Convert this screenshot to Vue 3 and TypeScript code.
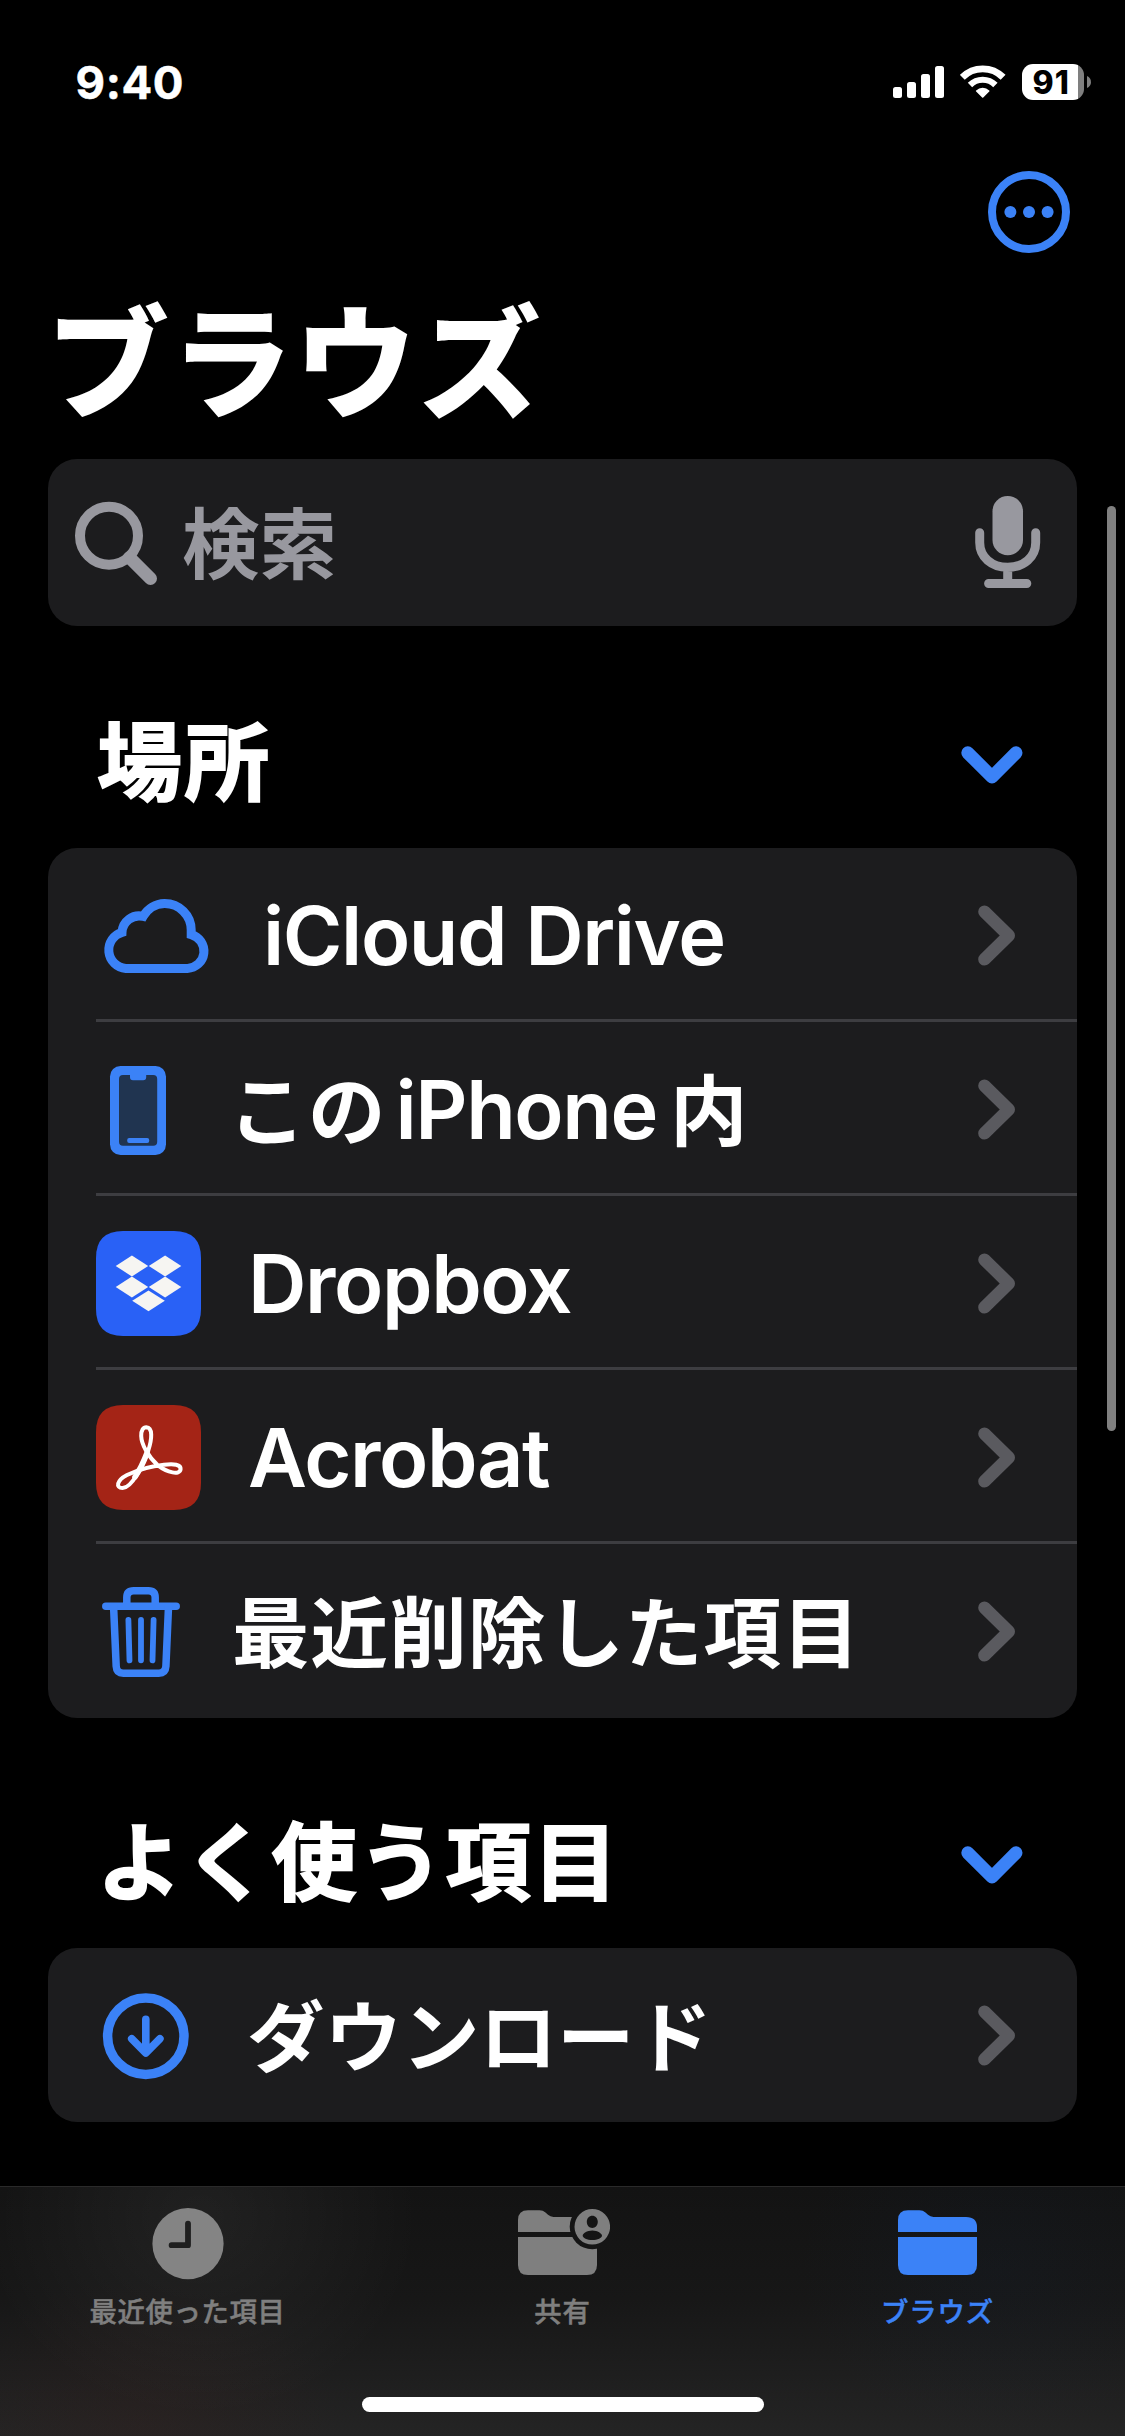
<script setup lang="ts">
interface TextPart {
  text: string
  script: 'jp' | 'latin'
}

interface Place {
  id: string
  parts: TextPart[]
}

interface Section {
  id: string
  title: string
  items: Place[]
}

const sections: Section[] = [
  {
    id: 'locations',
    title: '場所',
    items: [
      { id: 'icloud', parts: [{ text: 'iCloud Drive', script: 'latin' }] },
      {
        id: 'phone',
        parts: [
          { text: 'この', script: 'jp' },
          { text: 'iPhone', script: 'latin' },
          { text: '内', script: 'jp' },
        ],
      },
      { id: 'dropbox', parts: [{ text: 'Dropbox', script: 'latin' }] },
      { id: 'acrobat', parts: [{ text: 'Acrobat', script: 'latin' }] },
      { id: 'trash', parts: [{ text: '最近削除した項目', script: 'jp' }] },
    ],
  },
  {
    id: 'favorites',
    title: 'よく使う項目',
    items: [{ id: 'downloads', parts: [{ text: 'ダウンロード', script: 'jp' }] }],
  },
]
</script>

<template>
  <div class="screen">
    <header class="status">
      <span class="time">9:40</span>
      <div class="indicators">
        <svg class="signal" width="51" height="32" fill="#fff">
          <rect x="0" y="21" width="9" height="11" rx="2.5" />
          <rect x="14" y="16" width="9" height="16" rx="2.5" />
          <rect x="28" y="8" width="9" height="24" rx="2.5" />
          <rect x="42" y="0" width="9" height="32" rx="2.5" />
        </svg>
        <svg class="wifi" width="46" height="33" fill="none" stroke="#fff">
          <path d="M2.3 12.3A28.8 28.8 0 0 1 43.1 12.3" stroke-width="6.9" />
          <path d="M10 20A18 18 0 0 1 35.4 20" stroke-width="6.2" />
          <path d="M22.7 32 16.7 26A8.6 8.6 0 0 1 28.7 26Z" fill="#fff" stroke-width="1.6" stroke-linejoin="round" />
        </svg>
        <div class="battery">
          <div class="cell"><span class="level">91</span></div>
          <svg width="4" height="12"><path d="M0 0C5.3 1.8 5.3 10.2 0 12Z" fill="#7f7f7f" /></svg>
        </div>
      </div>
    </header>

    <div class="toolbar">
      <svg width="82" height="82">
        <circle cx="41" cy="41" r="37" fill="none" stroke="#3b82f7" stroke-width="8" />
        <g fill="#3b82f7">
          <circle cx="22.4" cy="41" r="6" />
          <circle cx="41" cy="41" r="6" />
          <circle cx="59.6" cy="41" r="6" />
        </g>
      </svg>
    </div>

    <h1 class="title">ブラウズ</h1>

    <div class="search">
      <svg width="84" height="86" fill="none" stroke="#98989f">
        <circle cx="34" cy="35.8" r="29" stroke-width="10" />
        <path d="M54.5 57.5 75.5 78.5" stroke-width="13" stroke-linecap="round" />
      </svg>
      <span class="placeholder">検索</span>
      <svg class="mic" width="66" height="92" fill="none" stroke="#98989f" stroke-width="9" stroke-linecap="round">
        <rect x="17.5" y="0" width="30.5" height="59.3" rx="15.2" fill="#98989f" stroke="none" />
        <path d="M4.7 36.7V46.5C4.7 61 16.5 71.3 32.7 71.3S60.7 61 60.7 46.5V36.7M32.7 72V87M13.6 87.5H51.8" />
      </svg>
    </div>

    <section v-for="section in sections" :key="section.id" :class="section.id">
      <div class="section-head">
        <h2>{{ section.title }}</h2>
        <svg width="62" height="38" fill="none" stroke="#3b82f7" stroke-width="13" stroke-linecap="round" stroke-linejoin="round">
          <path d="M6.8 6.8 31 31 55 6.8" />
        </svg>
      </div>
      <ul class="card">
        <li v-for="item in section.items" :key="item.id" class="row" :class="item.id">
          <svg v-if="item.id === 'icloud'" class="icon" height="174" fill="none" stroke="#3b82f7" stroke-width="9">
            <path d="M29.8 120.4A18.4 18.4 0 0 1 26 84.4 17.2 17.2 0 0 1 47.2 68.4 25.5 25.5 0 0 1 68.5 55.5 26.5 26.5 0 0 1 95.2 82V86.6A17.2 17.2 0 0 1 91.4 120.4Z" />
          </svg>
          <svg v-else-if="item.id === 'phone'" class="icon" height="174">
            <rect x="14" y="44" width="56" height="89" rx="10.5" fill="#3b82f7" />
            <path d="M27 53H34V55.3Q34 58.3 37 58.3H47.2Q50.2 58.3 50.2 55.3V53H57.2Q61.2 53 61.2 57V119.7Q61.2 123.7 57.2 123.7H27Q23 123.7 23 119.7V57Q23 53 27 53Z" fill="#203450" />
            <rect x="31.2" y="116" width="22" height="5" rx="2" fill="#3b82f7" />
          </svg>
          <svg v-else-if="item.id === 'dropbox'" class="icon" height="174">
            <path d="M27 35H78Q105 35 105 62V113Q105 140 78 140H27Q0 140 0 113V62Q0 35 27 35Z" fill="#2961f6" />
            <g fill="#f6f5f2">
              <path d="M19.7 70 35.9 59.6 52.2 70 35.9 80.4Z" />
              <path d="M52.8 70 69.1 59.6 85.3 70 69.1 80.4Z" />
              <path d="M19.7 91 35.9 80.6 52.2 91 35.9 101.5Z" />
              <path d="M52.8 91 69.1 80.6 85.3 91 69.1 101.5Z" />
              <path d="M36.2 104.8 52.5 94.4 68.8 104.8 52.5 115.3Z" />
            </g>
          </svg>
          <svg v-else-if="item.id === 'acrobat'" class="icon" height="174">
            <path d="M27 35H78Q105 35 105 62V113Q105 140 78 140H27Q0 140 0 113V62Q0 35 27 35Z" fill="#a42416" />
            <g fill="none" stroke="#fff" stroke-linecap="round">
              <path
                d="M50.3 57.3C57 57.5 56 69 52.3 80.5C47 95 36 118 26.5 118C19.5 118 20.5 110.5 31 105C41 100.3 57 96 68 94.8C78 93.6 85 94.5 84.6 99.2C84 105.5 71 102.5 62.3 95.7C52 87 45.4 74 45.2 66C45.1 60 47.3 57.3 50.3 57.3Z"
                stroke-width="4" />
              <path d="M51 83C48 91 43 101 39 107" stroke-width="5.6" />
            </g>
          </svg>
          <svg v-else-if="item.id === 'trash'" class="icon" height="174" fill="none" stroke="#3b82f7" stroke-width="7.5" stroke-linecap="round">
            <path d="M9.8 62.3H80.2M30.8 62V53.5Q30.8 46.7 37.6 46.7H52.5Q59.2 46.7 59.2 53.5V62" />
            <path d="M17.6 63 20.2 122.3Q20.6 129.2 27.3 129.2H62.8Q69.5 129.2 69.9 122.3L72.5 63" />
            <path d="M32.4 76 33.5 116.3M45 76V116.3M57.6 76 56.5 116.3" stroke-width="5.8" />
          </svg>
          <svg v-else class="icon" height="174" fill="none" stroke="#3b82f7" stroke-linecap="round" stroke-linejoin="round">
            <circle cx="49.8" cy="88.2" r="38.2" stroke-width="9.5" />
            <path d="M49.8 71.2V104.5M35.7 90.8 49.8 105 63.9 90.8" stroke-width="7.6" />
          </svg>

          <span class="label">
            <span v-for="part in item.parts" :key="part.text" :class="part.script">{{ part.text }}</span>
          </span>

          <svg class="chevron" width="38" height="61" fill="none" stroke="#5a5a5f" stroke-width="12.6" stroke-linecap="round" stroke-linejoin="round">
            <path d="M6.5 6.7 30.7 30.5 6.5 54.3" />
          </svg>
        </li>
      </ul>
    </section>

    <div class="scrollbar"></div>

    <nav class="tabs">
      <div class="tab recents">
        <svg width="72" height="72">
          <circle cx="36" cy="35.7" r="35.6" fill="#848484" />
          <path d="M36 15.6V37.2H19.6" fill="none" stroke="#1f1f1f" stroke-width="5.8" stroke-linecap="round" stroke-linejoin="round" />
        </svg>
        <span>最近使った項目</span>
      </div>
      <div class="tab shared">
        <svg width="95" height="72">
          <mask id="badge-gap">
            <rect width="95" height="72" fill="#fff" />
            <circle cx="77.3" cy="18.7" r="22.6" fill="#000" />
          </mask>
          <g fill="#7f7f7f">
            <g mask="url(#badge-gap)">
              <path d="M3 24V12Q3 2.3 13 2.3H24.5Q28 2.3 30.5 4.5L33 6.8Q35.3 8.9 38.5 8.9H71Q82 8.9 82 19V24Z" />
              <path d="M3 29H82V57Q82 67 72 67H13Q3 67 3 57Z" />
            </g>
            <path
              fill-rule="evenodd"
              d="M77.3 1A17.8 17.8 0 1 1 77.3 36.6 17.8 17.8 0 1 1 77.3 1ZM77.3 7.8C74.2 7.8 71.8 10.4 71.8 13.8S74.2 20 77.3 20 82.8 17.2 82.8 13.8 80.4 7.8 77.3 7.8ZM77.3 22.5C72 22.5 67.7 25.5 67.7 27.7S72 32 77.3 32 87 29.8 87 27.7 82.6 22.5 77.3 22.5Z" />
          </g>
        </svg>
        <span>共有</span>
      </div>
      <div class="tab browse">
        <svg width="79" height="72" fill="#3b82f7">
          <path d="M0 24V12Q0 2.3 10 2.3H21.5Q25 2.3 27.5 4.5L30 6.8Q32.3 8.9 35.5 8.9H68Q79 8.9 79 19V24Z" />
          <path d="M0 29H79V57Q79 67 69 67H10Q0 67 0 57Z" />
        </svg>
        <span>ブラウズ</span>
      </div>
      <div class="home-indicator"></div>
    </nav>
  </div>
</template>

<style>
body {
  margin: 0;
  background: #000;
}
</style>

<style scoped>
.screen {
  position: relative;
  box-sizing: border-box;
  width: 1125px;
  height: 2436px;
  overflow: hidden;
  background: #000;
  color: #fff;
  font-family: "Noto Sans CJK JP", sans-serif;
}
svg {
  display: block;
  flex: none;
}
.status {
  display: flex;
  justify-content: space-between;
  height: 171px;
  box-sizing: border-box;
  padding: 52px 34px 0 75.5px;
}
.time {
  font: 700 45.5px/61px Inter, sans-serif;
  letter-spacing: 0.6px;
  -webkit-text-stroke: 0.5px #fff;
}
.indicators {
  display: flex;
  height: 60px;
}
.signal {
  margin: 14px 16px 0 0;
}
.wifi {
  margin: 13px 16px 0 0;
}
.battery {
  display: flex;
  align-items: center;
  gap: 3px;
  height: 36px;
  margin-top: 12px;
}
.cell {
  width: 62px;
  height: 36px;
  border-radius: 11px;
  background: linear-gradient(90deg, #fff 56px, #7f7f7f 56px);
}
.level {
  display: block;
  padding-left: 10.5px;
  color: #000;
  font: 800 32px/37px Inter, sans-serif;
  letter-spacing: 1px;
}
.toolbar {
  display: flex;
  justify-content: flex-end;
  height: 106px;
  padding-right: 55px;
}
.title {
  margin: 0 0 26px 47px;
  font-size: 122px;
  font-weight: 900;
  line-height: 156px;
  letter-spacing: 1.8px;
}
.search {
  display: flex;
  align-items: center;
  box-sizing: border-box;
  height: 167px;
  margin: 0 48px;
  padding: 0 36px 0 27px;
  border-radius: 29px;
  background: #1c1c1e;
}
.placeholder {
  flex: 1;
  padding: 0 0 7px 23px;
  color: #98989f;
  font-size: 77.5px;
  font-weight: 700;
  line-height: 100px;
}
.mic {
  margin-bottom: 1px;
}
.section-head {
  display: flex;
  align-items: center;
  justify-content: space-between;
  height: 167px;
  margin: 55px 102px 0 97px;
}
.favorites .section-head {
  margin-top: 63px;
}
h2 {
  margin: 0;
  padding-bottom: 16px;
  font-size: 85px;
  font-weight: 700;
  line-height: 120px;
  letter-spacing: 2.2px;
  -webkit-text-stroke: 1.8px #fff;
}
.card {
  margin: 0 48px;
  padding: 0;
  border-radius: 29px;
  background: #1c1c1e;
  list-style: none;
}
.row {
  display: flex;
  align-items: center;
  height: 174px;
  margin-left: 48px;
  box-shadow: inset 0 -3px #3d3d41;
}
.row:last-child {
  box-shadow: none;
}
.icon {
  width: 152px;
}
.icloud .icon {
  width: 167px;
}
.phone .icon {
  width: 132.5px;
}
.trash .icon {
  width: 136px;
}
.downloads .icon {
  width: 151px;
}
.label {
  display: flex;
  align-items: center;
  flex: 1;
  white-space: nowrap;
}
.latin {
  padding-top: 2px;
  font: 600 81px/100px Inter, sans-serif;
  letter-spacing: -1.4px;
}
.acrobat .latin,
.dropbox .latin {
  letter-spacing: -1.4px;
}
.jp {
  padding-bottom: 7px;
  font-size: 77.5px;
  font-weight: 700;
  line-height: 100px;
}
.trash .jp {
  letter-spacing: 1.1px;
}
.phone .jp {
  letter-spacing: 2px;
}
.phone .latin {
  margin: 0 13px 0 8px;
}
.chevron {
  margin-right: 61px;
}
.scrollbar {
  position: absolute;
  top: 506px;
  left: 1107px;
  width: 9px;
  height: 925px;
  border-radius: 5px;
  background: #808080;
}
.tabs {
  position: absolute;
  left: 0;
  bottom: 0;
  display: grid;
  grid-template-columns: repeat(3, 1fr);
  align-content: start;
  box-sizing: border-box;
  width: 100%;
  height: 250px;
  padding-top: 21px;
  border-top: 1px solid #2a2a2a;
  background:
    radial-gradient(ellipse 200px 150px at 140px 240px, rgba(70, 30, 26, 0.16), transparent),
    radial-gradient(ellipse 220px 200px at 200px 30px, rgba(255, 255, 255, 0.055), transparent),
    radial-gradient(ellipse 200px 170px at 1000px 80px, rgba(20, 45, 80, 0.1), transparent),
    linear-gradient(#131313, #171717 45%, #242424);
}
.tab {
  display: flex;
  flex-direction: column;
  align-items: center;
  gap: 10px;
  color: #7f7f7f;
  font-size: 27.4px;
  font-weight: 500;
  line-height: 40px;
  letter-spacing: 0.8px;
  -webkit-text-stroke: 0.5px currentColor;
}
.recents span {
  letter-spacing: 0.6px;
}
.tab span {
  white-space: nowrap;
}
.browse {
  color: #3b82f7;
}
.home-indicator {
  grid-column: 1 / -1;
  justify-self: center;
  width: 402px;
  height: 15px;
  margin-top: 67px;
  border-radius: 8px;
  background: #fff;
}
</style>
